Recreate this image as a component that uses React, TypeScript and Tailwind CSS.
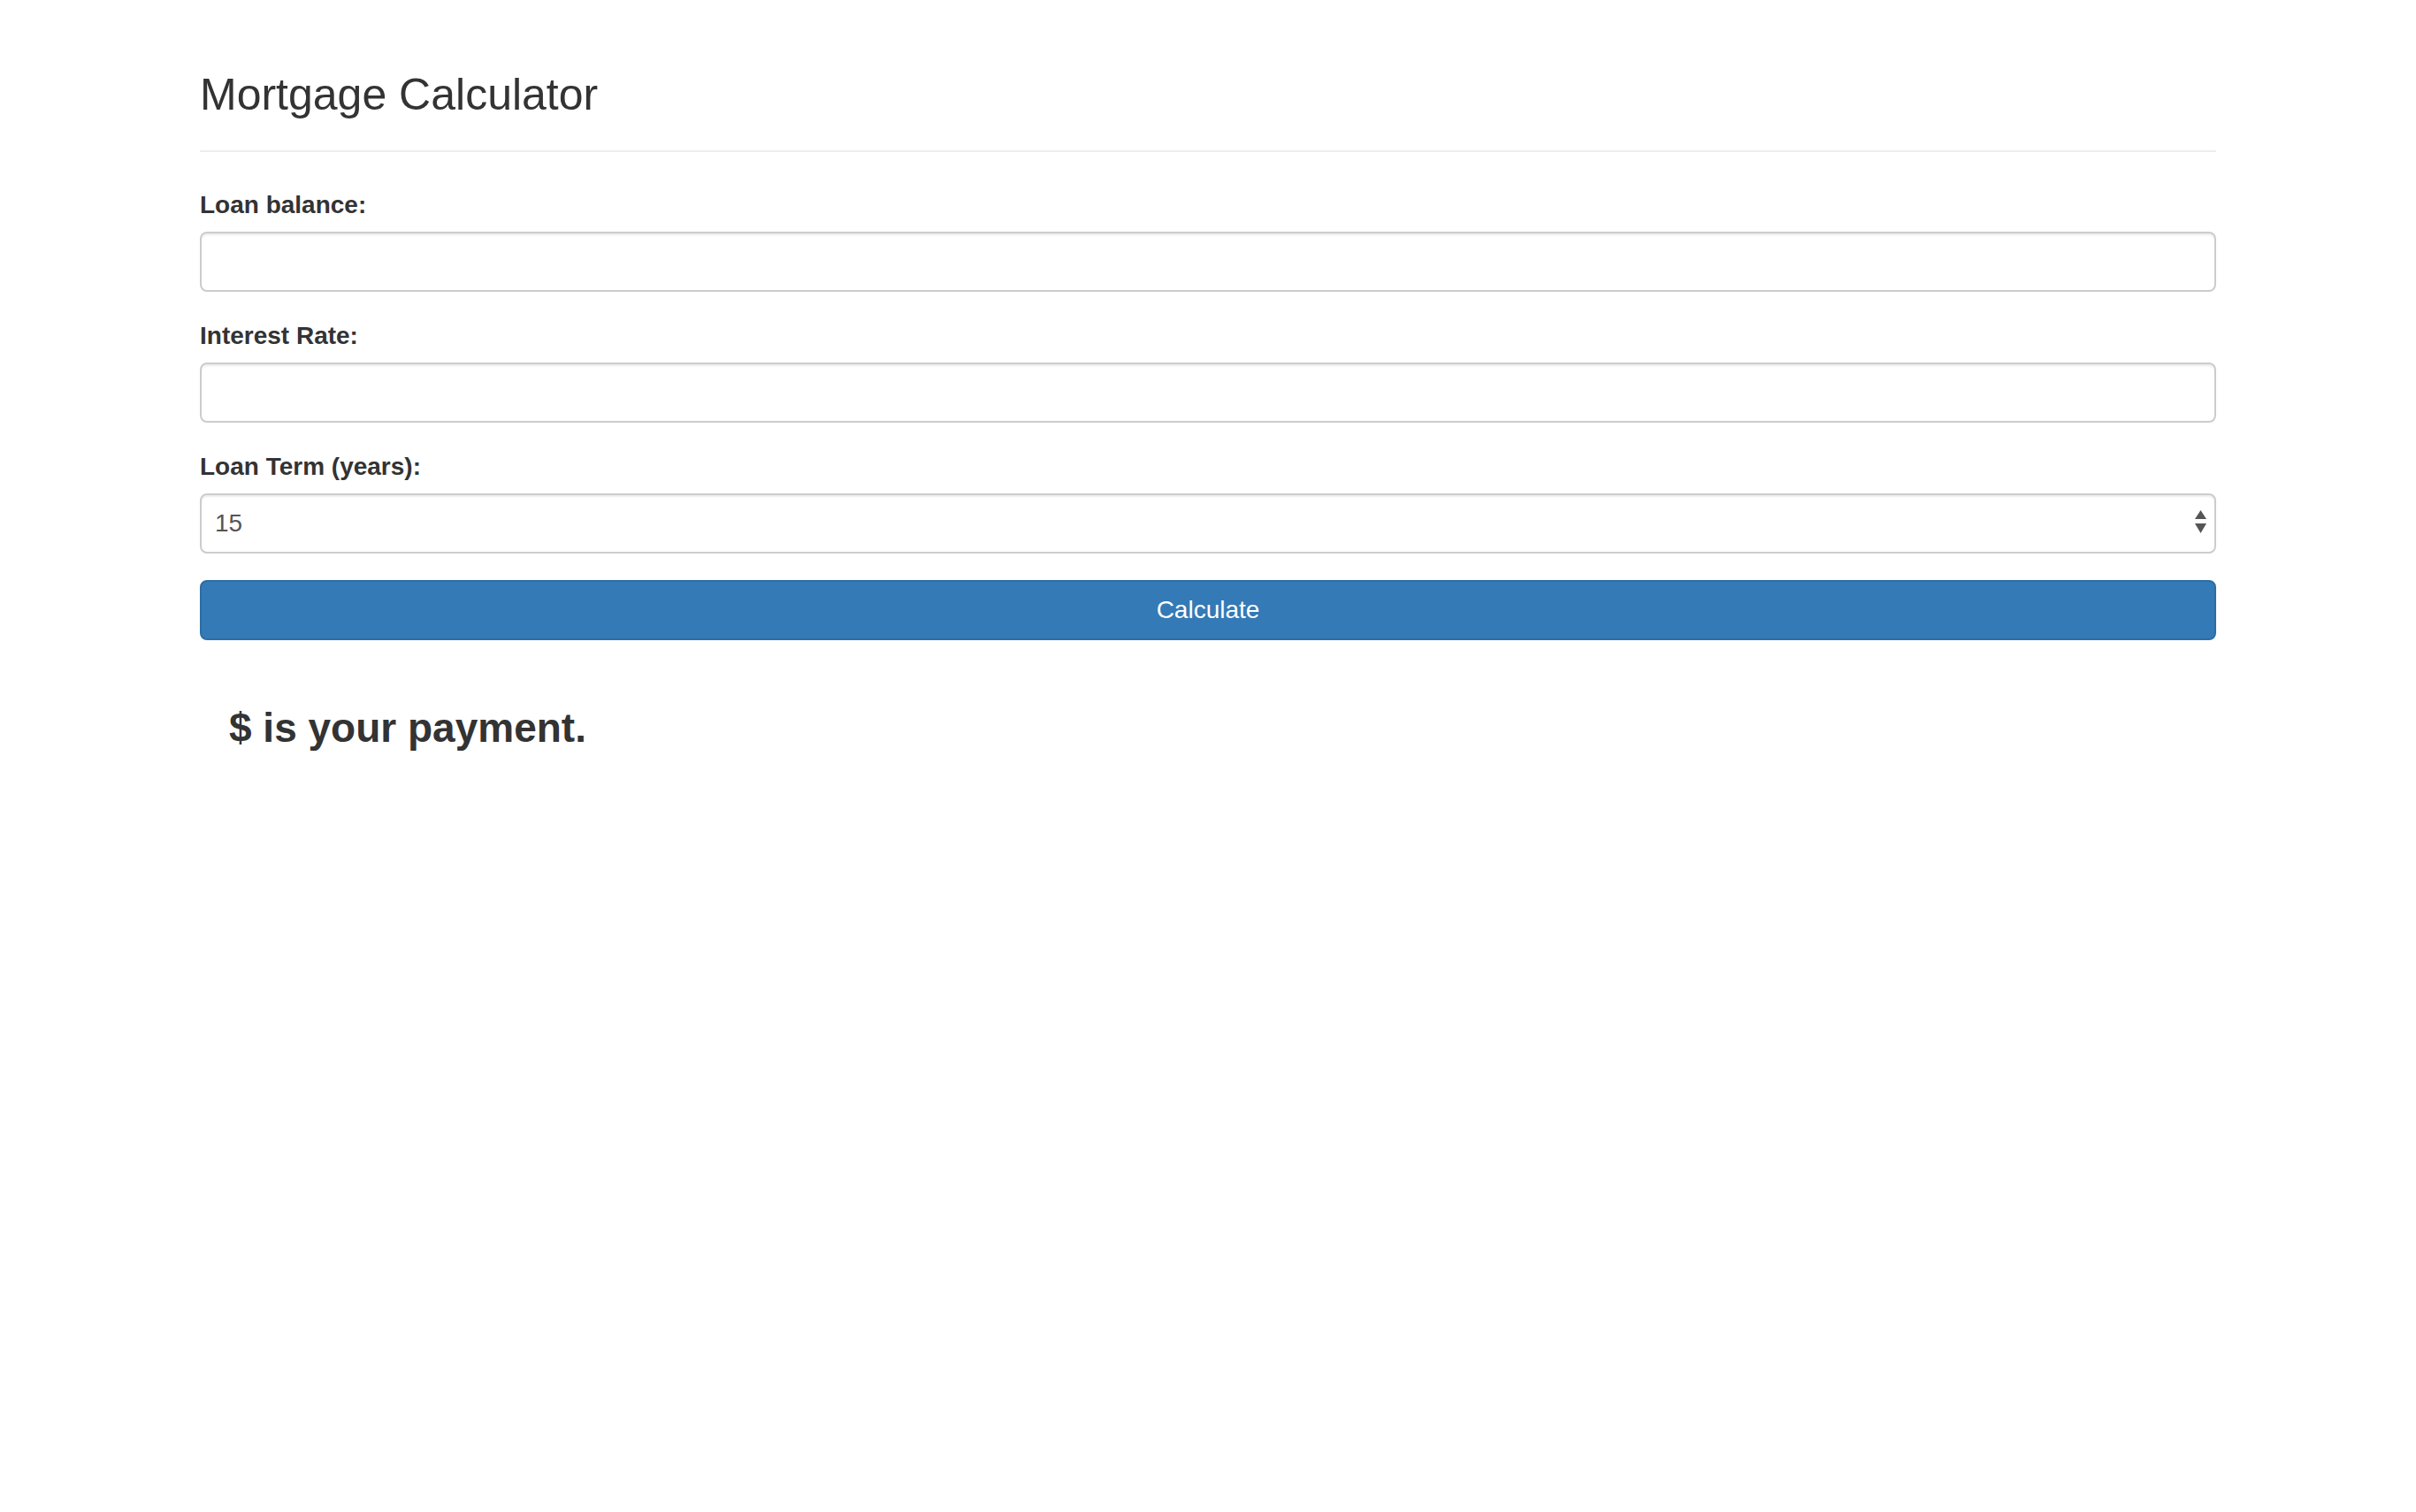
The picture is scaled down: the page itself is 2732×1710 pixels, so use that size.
import React from "react";

export default function App() {
  const font = { fontFamily: '"Liberation Sans", Arial, sans-serif' };
  return (
    <div className="min-h-screen w-full bg-white text-[#333]" style={font}>
      <div className="mx-auto w-[2280px]">
        <h1 className="pt-[81px] text-[50px] leading-[53px] font-normal">Mortgage Calculator</h1>
        <div className="mt-[36px] h-[2px] bg-[#eee]" />
        <form className="mt-[40px] flex flex-col" onSubmit={(e) => e.preventDefault()}>
          <div className="mb-[30px] flex flex-col">
            <label className="mb-[10px] text-[28px] leading-[40px] font-bold">Loan balance:</label>
            <input
              type="text"
              className="h-[68px] w-full rounded-[8px] border-2 border-[#ccc] bg-white px-[24px] text-[28px] shadow-[inset_0_2px_2px_rgba(0,0,0,0.075)] outline-none"
            />
          </div>
          <div className="mb-[30px] flex flex-col">
            <label className="mb-[10px] text-[28px] leading-[40px] font-bold">Interest Rate:</label>
            <input
              type="text"
              className="h-[68px] w-full rounded-[8px] border-2 border-[#ccc] bg-white px-[24px] text-[28px] shadow-[inset_0_2px_2px_rgba(0,0,0,0.075)] outline-none"
            />
          </div>
          <div className="mb-[30px] flex flex-col">
            <label className="mb-[10px] text-[28px] leading-[40px] font-bold">Loan Term (years):</label>
            <div className="relative">
              <select
                defaultValue="15"
                className="h-[68px] w-full appearance-none rounded-[8px] border-2 border-[#ccc] bg-white pl-[15px] text-[28px] text-[#555] shadow-[inset_0_2px_2px_rgba(0,0,0,0.075)] outline-none"
                style={font}
              >
                <option value="15">15</option>
                <option value="30">30</option>
              </select>
              <svg
                className="pointer-events-none absolute right-[11px] top-[19px]"
                width="13"
                height="28"
                viewBox="0 0 13 28"
              >
                <polygon points="6.5,0 13,10 0,10" fill="#555" />
                <polygon points="0,15 13,15 6.5,26" fill="#555" />
              </svg>
            </div>
          </div>
          <button
            type="submit"
            className="h-[68px] w-full rounded-[8px] border-2 border-[#2e6da4] bg-[#337ab7] text-[28px] text-white"
            style={font}
          >
            Calculate
          </button>
        </form>
        <div className="mt-[73px] pl-[33px]">
          <h3 className="text-[46px] leading-[53px] font-bold">$ is your payment.</h3>
        </div>
      </div>
    </div>
  );
}
